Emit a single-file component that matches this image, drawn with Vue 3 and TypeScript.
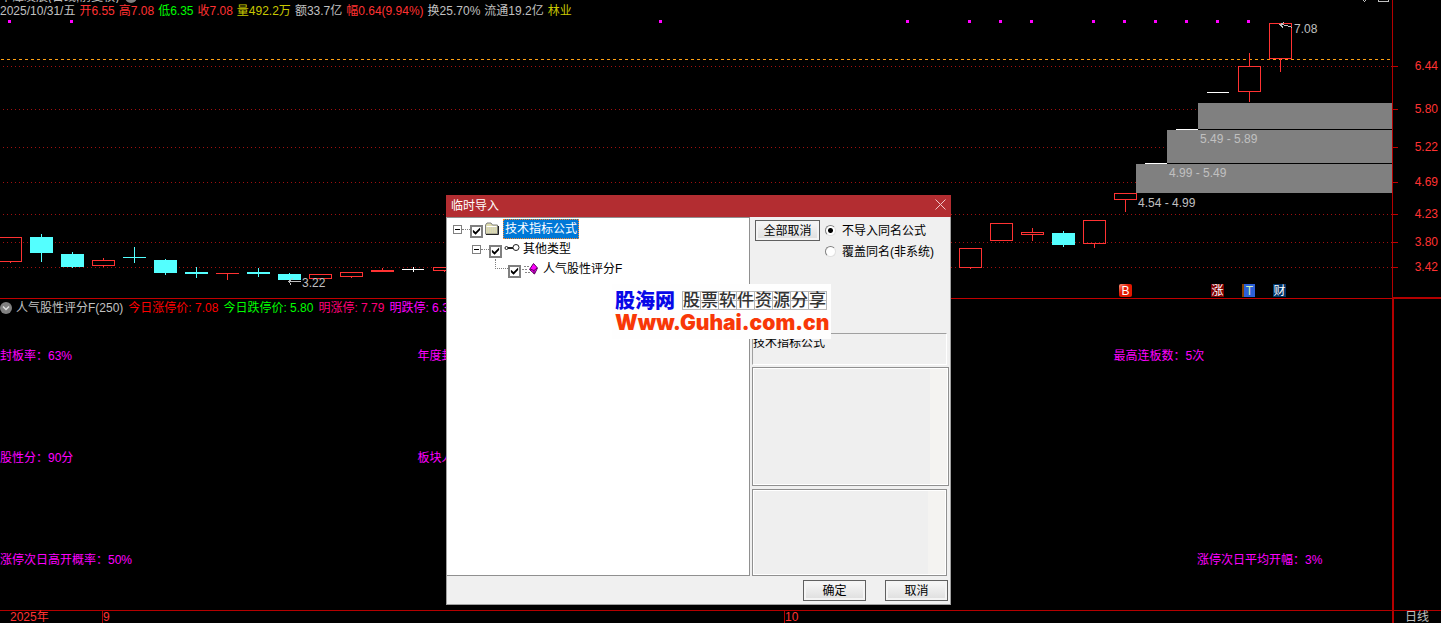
<script setup lang="ts">
import { ref } from 'vue'

type Kind = 'up' | 'down' | 'flat'
interface Candle { x: number; top: number; bottom: number; high: number; low: number; kind: Kind }

const quote: { text: string; tone: string }[] = [
  { text: '2025/10/31/五', tone: 'grey' },
  { text: '开6.55', tone: 'red' },
  { text: '高7.08', tone: 'red' },
  { text: '低6.35', tone: 'green' },
  { text: '收7.08', tone: 'red' },
  { text: '量492.2万', tone: 'yellow' },
  { text: '额33.7亿', tone: 'grey' },
  { text: '幅0.64(9.94%)', tone: 'red' },
  { text: '换25.70%', tone: 'grey' },
  { text: '流通19.2亿', tone: 'grey' },
  { text: '林业', tone: 'yellow' },
]

const indicator: { text: string; tone: string }[] = [
  { text: '人气股性评分F(250)', tone: 'grey' },
  { text: '今日涨停价: 7.08', tone: 'pure-red' },
  { text: '今日跌停价: 5.80', tone: 'green' },
  { text: '明涨停: 7.79', tone: 'rose' },
  { text: '明跌停: 6.38', tone: 'magenta' },
]

const prices: { y: number; label: string }[] = [
  { y: 66, label: '6.44' },
  { y: 109, label: '5.80' },
  { y: 147, label: '5.22' },
  { y: 182, label: '4.69' },
  { y: 214, label: '4.23' },
  { y: 242, label: '3.80' },
  { y: 267, label: '3.42' },
]

const c = (x: number, top: number, bottom: number, high: number, low: number, kind: Kind): Candle =>
  ({ x, top, bottom, high, low, kind })

const candles: Candle[] = [
  c(10, 237, 262, 237, 263, 'up'),
  c(41, 237, 253, 234, 262, 'down'),
  c(72, 254, 267, 252, 268, 'down'),
  c(103, 260, 266, 258, 267, 'up'),
  c(134, 257, 258, 247, 263, 'down'),
  c(165, 260, 273, 259, 275, 'down'),
  c(196, 272, 274, 267, 278, 'down'),
  c(227, 273, 274, 273, 280, 'up'),
  c(258, 272, 274, 268, 277, 'down'),
  c(289, 274, 280, 273, 281, 'down'),
  c(320, 274, 279, 274, 279, 'up'),
  c(351, 272, 277, 272, 278, 'up'),
  c(382, 270, 272, 268, 272, 'up'),
  c(413, 269, 270, 267, 272, 'flat'),
  c(444, 267, 271, 267, 272, 'up'),
  c(970, 248, 268, 248, 269, 'up'),
  c(1001, 223, 241, 223, 241, 'up'),
  c(1032, 232, 235, 228, 241, 'up'),
  c(1063, 233, 245, 231, 247, 'down'),
  c(1094, 220, 244, 220, 248, 'up'),
  c(1125, 193, 200, 193, 212, 'up'),
  c(1156, 163, 164, 163, 164, 'flat'),
  c(1187, 129, 130, 129, 130, 'flat'),
  c(1218, 92, 93, 92, 93, 'flat'),
  c(1249, 66, 92, 53, 102, 'up'),
  c(1280, 23, 59, 23, 72, 'up'),
]
const colours: Record<Kind, string> = { up: '#ff3232', down: '#54ffff', flat: '#ffffff' }

const signals = [8, 70, 659, 906, 968, 999, 1030, 1092, 1123, 1154, 1185, 1216, 1247]

const bands: { x: number; y: number; height: number; label: string; labelX: number; labelY: number }[] = [
  { x: 1198, y: 103, height: 26, label: '5.49 - 5.89', labelX: 1200, labelY: 143 },
  { x: 1167, y: 130, height: 33, label: '4.99 - 5.49', labelX: 1169, labelY: 177 },
  { x: 1136, y: 164, height: 29, label: '4.54 - 4.99', labelX: 1138, labelY: 207 },
]

const stats: string[][] = [
  ['封板率：63%', '年度封板率：63%', '最高连板数：5次'],
  ['股性分：90分', '板块人气：90分'],
]

const rootOn = ref(true)
const groupOn = ref(true)
const itemOn = ref(true)
const mode = ref('skip')
</script>

<template>
  <div class="terminal">
    <section class="price-pane">
      <svg class="chart" aria-hidden="true">
        <line v-for="p in prices" :key="p.y" class="grid" x1="3" x2="100%" :y1="p.y + 0.5" :y2="p.y + 0.5" />
        <line class="last" x1="1" x2="100%" y1="59.5" y2="59.5" />
        <template v-for="b in bands" :key="b.x">
          <rect :x="b.x" :y="b.y" width="100%" :height="b.height" fill="#808080" />
          <rect :x="b.x" :y="b.y + b.height" width="100%" height="1" fill="#000" />
        </template>
        <rect v-for="s in signals" :key="s" :x="s" y="20" width="3" height="3" fill="#f0f" />
        <g v-for="k in candles" :key="k.x" :fill="colours[k.kind]">
          <rect :x="k.x" :y="k.high" width="1" :height="Math.max(k.top - k.high, 0)" />
          <rect :x="k.x" :y="k.bottom" width="1" :height="k.low - k.bottom" />
          <rect
            v-if="k.kind === 'up' && k.bottom - k.top > 2"
            :x="k.x - 10.5" :y="k.top + 0.5" width="22" :height="k.bottom - k.top - 1"
            fill="none" :stroke="colours.up"
          />
          <rect v-else :x="k.x - 11" :y="k.top" :width="k.kind === 'flat' ? 22 : 23" :height="k.bottom - k.top" />
        </g>
        <text v-for="b in bands" :key="b.label" :x="b.labelX" :y="b.labelY">{{ b.label }}</text>
        <text x="302" y="287">3.22</text>
        <text x="1294" y="33">7.08</text>
        <g class="arrow">
          <path d="M301 281.5H289M293 278.5l-4 3 2 3" />
          <path d="M1292 27.5l-5-2-6-1M1284 22.5l-4 2 3 3" />
          <path d="M1363 0l1.500 1.500 1.500-1.500M1378 0v1.500h10V0" />
        </g>
      </svg>
      <header class="heading">
        <div class="stock"><span>平潭发展(日线,前复权)</span><i class="knob"></i></div>
        <div class="quote"><span v-for="q in quote" :key="q.text" :class="q.tone">{{ q.text }}</span></div>
      </header>
      <div class="badges">
        <span class="badge buy">B</span>
        <span class="badge rise">涨</span>
        <span class="badge trade">T</span>
        <span class="badge report">财</span>
      </div>
    </section>
    <aside class="price-axis">
      <span v-for="p in prices" :key="p.label" class="price" :style="{ top: p.y - 8 + 'px' }">{{ p.label }}</span>
    </aside>

    <section class="indicator-pane">
      <div class="indicator">
        <svg width="12" height="12" viewBox="0 0 12 12" aria-hidden="true">
          <circle cx="6" cy="6" r="6" fill="#808080" />
          <path d="M3 4.500l3 3 3-3" fill="none" stroke="#e0e0e0" stroke-width="1.500" />
        </svg>
        <span v-for="i in indicator" :key="i.text" :class="i.tone">{{ i.text }}</span>
      </div>
      <div class="stats">
        <div v-for="(row, n) in stats" :key="n" class="stat-row">
          <span v-for="s in row" :key="s">{{ s }}</span>
        </div>
        <div class="stat-row wide"><span>涨停次日高开概率：50%</span><span>涨停次日平均开幅：3%</span></div>
      </div>
    </section>
    <aside class="side"></aside>

    <footer class="dates">
      <span class="year">2025年</span>
      <span class="month">9</span>
      <span class="month">10</span>
    </footer>
    <aside class="period">日线</aside>

    <form class="dialog" role="dialog" aria-labelledby="dialog-title" @submit.prevent>
      <div class="title-bar">
        <span id="dialog-title">临时导入</span>
        <button type="button" class="close" aria-label="关闭">
          <svg width="11" height="11" viewBox="0 0 11 11"><path d="M.5.5l10 10M10.500.5l-10 10" stroke="#f0c8c8" fill="none" /></svg>
        </button>
      </div>
      <div class="content">
        <div class="tree">
          <div class="node">
            <button type="button" class="toggle" aria-label="折叠"></button><i class="branch"></i>
            <input id="root" v-model="rootOn" type="checkbox" class="tick" />
            <svg class="folder" width="16" height="14" viewBox="0 0 16 14" aria-hidden="true">
              <path d="M1.500 12V3l1.500-2h4l1.500 2h5v9z" fill="#dedcae" stroke="#808080" />
              <path d="M2.500 4.500h10" stroke="#fff" />
              <path d="M3 6h9M3 8h9M3 10h9" stroke="#c9c9c9" stroke-dasharray="1 1" />
              <path d="M2 12.500h12.500V4" fill="none" stroke="#222" />
            </svg>
            <label for="root" class="selected">技术指标公式</label>
          </div>
          <div class="node second">
            <button type="button" class="toggle" aria-label="折叠"></button><i class="branch"></i>
            <input id="group" v-model="groupOn" type="checkbox" class="tick" />
            <svg class="key" width="18" height="10" viewBox="0 0 18 10" aria-hidden="true">
              <g fill="none" stroke="#222"><circle cx="2.500" cy="5" r="1.500" /><path d="M4 5H9" stroke-width="2" /><circle cx="12" cy="4.500" r="3" /></g>
            </svg>
            <label for="group">其他类型</label>
          </div>
          <div class="node third">
            <i class="elbow"></i>
            <input id="item" v-model="itemOn" type="checkbox" class="tick" />
            <svg class="gem" width="18" height="12" viewBox="0 0 18 12" aria-hidden="true">
              <path d="M3 3.500h5M1 6.500h6M4 9.500h5" stroke="#888" stroke-dasharray="2 1" />
              <path d="M12.500.5l4 4.500-3 6-5-4.500z" fill="#f0f" stroke="#5b005b" />
              <path d="M9 6l4 1.500 3-2.500M13 7.500V11" stroke="#5b005b" fill="none" />
            </svg>
            <label for="item">人气股性评分F</label>
          </div>
        </div>
        <div class="options">
          <div class="choices">
            <button type="button" class="push">全部取消</button>
            <div class="radios">
              <label><input v-model="mode" type="radio" name="mode" value="skip" />不导入同名公式</label>
              <label><input v-model="mode" type="radio" name="mode" value="replace" />覆盖同名(非系统)</label>
            </div>
          </div>
          <div class="description">技术指标公式</div>
          <div class="box tall"></div>
          <div class="box short"></div>
        </div>
      </div>
      <div class="actions">
        <button type="submit" class="push">确定</button>
        <button type="button" class="push">取消</button>
      </div>
    </form>

    <div class="watermark">
      <div class="brand">
        <strong>股海网</strong>
        <span class="slogan"><span v-for="ch in '股票软件资源分享'" :key="ch">{{ ch }}</span></span>
      </div>
      <div class="site">Www.Guhai.com.cn</div>
    </div>
  </div>
</template>

<style>
body {
  background: #000;
}
</style>

<style scoped>
.terminal {
  position: relative;
  display: grid;
  grid-template-columns: minmax(0, 1fr) 49px;
  grid-template-rows: 299px minmax(311px, 1fr) 13px;
  min-height: 100vh;
  overflow: hidden;
  background: #000;
  color: #c0c0c0;
  font: 12px/16px "Liberation Sans", "Noto Sans CJK SC", sans-serif;
  white-space: nowrap;
}
.terminal * {
  box-sizing: border-box;
}
button {
  font: inherit;
  color: inherit;
  padding: 0;
}
.grey { color: #c0c0c0; }
.red { color: #ff3232; }
.pure-red { color: #f00; }
.green { color: #0f0; }
.yellow { color: #c8c800; }
.rose { color: #ff0078; }
.magenta { color: #f0f; }

.price-pane {
  position: relative;
  border-bottom: 1px solid #c00000;
  overflow: hidden;
}
.chart {
  position: absolute;
  inset: 0;
  width: 100%;
  height: 100%;
  shape-rendering: crispEdges;
}
.chart text { fill: #c0c0c0; }
.grid { stroke: #a01010; stroke-dasharray: 1 3; }
.last { stroke: #ffa014; stroke-dasharray: 3 3; }
.arrow { fill: none; stroke: #c0c0c0; }
.heading { position: relative; }
.stock {
  display: flex;
  align-items: flex-end;
  gap: 6px;
  height: 3px;
  overflow: hidden;
  line-height: 11px;
}
.knob {
  width: 12px;
  height: 12px;
  border-radius: 50%;
  background: #808080;
}
.quote {
  display: flex;
  gap: 4px;
  line-height: 16px;
}
.badges {
  position: absolute;
  right: 106px;
  bottom: 1px;
  display: grid;
  grid-template-columns: 92px 31px 31px 13px;
}
.badge {
  width: 13px;
  height: 13px;
  color: #fff;
  font-size: 12px;
  line-height: 14px;
  text-align: center;
}
.buy { border-radius: 2px; background: linear-gradient(135deg, #ff9a80, #e01800 40%); }
.rise { background: #800000; }
.trade { border-left: 2px solid #804000; background: #2c60d8; color: #d0f0b0; }
.report { background: #003468; }

.price-axis {
  position: relative;
  border-left: 1px solid #b40000;
  border-bottom: 2px solid #b40000;
  color: #ff3232;
}
.price {
  position: absolute;
  left: 0;
  right: 3px;
  display: flex;
  align-items: center;
  justify-content: space-between;
}
.price::before {
  content: "";
  width: 5px;
  border-top: 1px solid #c00000;
}
.side, .period { border-left: 2px solid #b40000; }

.indicator-pane {
  display: flex;
  flex-direction: column;
}
.indicator {
  display: flex;
  align-items: center;
  padding-top: 1px;
}
.indicator svg { margin-right: 4px; }
.indicator span { margin-right: 5px; }
.stats {
  flex: 1;
  display: grid;
  grid-template-rows: 102px 102px auto;
  padding-top: 32px;
  color: #f0f;
}
.stat-row {
  display: grid;
  grid-template-columns: 30% 50% auto;
}
.stat-row.wide { grid-template-columns: 86% auto; }

.dates {
  display: grid;
  grid-template-columns: 102px 682px auto;
  border-top: 1px solid #b40000;
  color: #ff3232;
  line-height: 12px;
}
.year { padding-left: 10px; }
.month { border-left: 1px solid #b40000; }
.period {
  padding-left: 11px;
  border-top: 1px solid #b40000;
  line-height: 12px;
}

.dialog {
  position: absolute;
  left: 446px;
  top: 195px;
  width: 505px;
  border: solid #a0a0a0;
  border-width: 0 1px 1px;
  background: #f0f0f0;
  color: #000;
}
.title-bar {
  display: flex;
  align-items: center;
  justify-content: space-between;
  height: 22px;
  margin: 0 -1px;
  padding: 0 5px;
  background: #b32d31;
  color: #fff;
}
.close {
  display: flex;
  border: 0;
  background: none;
  margin-bottom: 4px;
}
.content {
  display: grid;
  grid-template-columns: 303px minmax(0, 1fr);
  gap: 2px;
  height: 359px;
}
.tree {
  border: 1px solid #909090;
  border-left: 0;
  background: #fff;
  padding: 1px 0 0 6px;
}
.node {
  position: relative;
  display: flex;
  align-items: center;
  height: 20px;
}
.second { padding-left: 19px; }
.third { padding-left: 42px; }
.toggle {
  position: relative;
  width: 9px;
  height: 9px;
  border: 1px solid #808080;
  background: #fff;
}
.toggle::before {
  content: "";
  position: absolute;
  left: 1px;
  right: 1px;
  top: 3px;
  border-top: 1px solid #000;
}
.branch {
  width: 8px;
  border-top: 1px dotted #808080;
}
.elbow {
  width: 13px;
  height: 10px;
  margin-bottom: 10px;
  border: dotted #808080;
  border-width: 0 0 1px 1px;
}
.tick {
  appearance: none;
  width: 13px;
  height: 13px;
  margin: 4px 0 0;
  border: 2px solid #808080;
  background: #fff;
}
.tick:checked::before {
  content: "";
  display: block;
  width: 9px;
  height: 9px;
  background: #000;
  clip-path: polygon(10% 35%, 40% 62%, 90% 10%, 90% 40%, 40% 92%, 10% 65%);
}
.folder { margin-right: 3px; margin-left: 1px; }
.key { margin: 0 1px 2px 2px; }
.gem { margin-right: 4px; }
.selected {
  height: 20px;
  padding: 0 1px;
  border: 1px dotted #ff8728;
  background: #0078d7;
  color: #fff;
  line-height: 18px;
}
.options {
  display: flex;
  flex-direction: column;
}
.choices {
  flex: 1;
  display: flex;
  align-items: flex-start;
  gap: 5px;
  padding: 3px 0 0 3px;
}
.push {
  width: 63px;
  height: 21px;
  border: 1px solid #606060;
  background: linear-gradient(#f8f8f8, #dedede);
  box-shadow: inset 0 0 0 2px #f4f4f4;
  line-height: 20px;
}
.choices .push { width: 65px; }
.radios {
  display: grid;
  grid-template-rows: 21px 21px;
}
.radios label {
  display: flex;
  align-items: center;
  gap: 6px;
}
.radios input {
  appearance: none;
  width: 11px;
  height: 11px;
  margin: 0;
  border: 1px solid;
  border-color: #808080 #e0e0e0 #e0e0e0 #808080;
  border-radius: 50%;
  background: #fff;
}
.radios input:checked {
  background: radial-gradient(circle, #000 0 2px, #fff 3px);
}
.description {
  height: 32px;
  margin-right: 3px;
  border: solid;
  border-color: #a0a0a0 #fff #fff #a0a0a0;
  border-width: 1px;
  padding-top: 1px;
}
.box {
  border: 1px solid #909090;
  box-shadow: inset 0 0 0 1px #fff;
  background: linear-gradient(to left, #f4f3f1 18px, #efefef 18px);
}
.tall { height: 119px; margin: 2px 1px 3px 0; }
.short { height: 87px; margin-right: 3px; }
.actions {
  display: flex;
  justify-content: flex-end;
  gap: 19px;
  padding: 4px 2px 3px;
}

.watermark {
  position: absolute;
  left: 612px;
  top: 284px;
  width: 219px;
  height: 55px;
  padding: 4px 3px;
  background: #fefefe;
}
.brand {
  display: flex;
  align-items: center;
  gap: 7px;
  height: 25px;
}
.brand strong {
  color: #0808e8;
  font-size: 20px;
  font-weight: 900;
}
.slogan {
  display: flex;
  background: linear-gradient(#b8b8b8, #b8b8b8) center / 100% 1px no-repeat;
  border: solid #b8b8b8;
  border-width: 1px 0 1px 1px;
}
.slogan span {
  width: 18px;
  border-right: 1px solid #b8b8b8;
  color: #333;
  font-size: 17px;
  font-weight: 500;
  line-height: 17px;
}
.site {
  color: #f83808;
  font: 900 21px/20px Inter, "DejaVu Sans", sans-serif;
}
</style>
